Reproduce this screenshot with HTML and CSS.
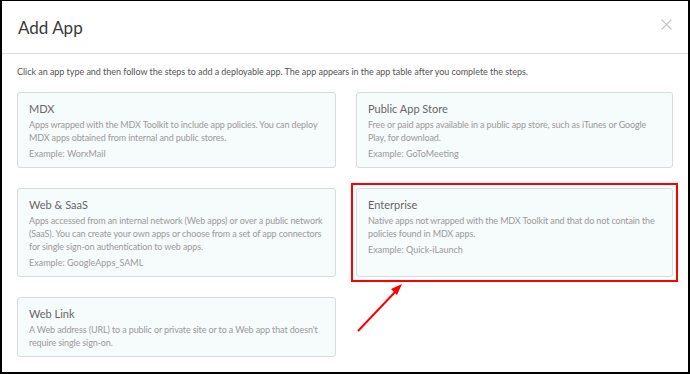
FILE: index.html
```html
<!DOCTYPE html>
<html lang="en">
<head>
    <meta charset="UTF-8">
    <meta name="viewport" content="width=device-width, initial-scale=1.0">
    <title>Add App</title>
    <link rel="stylesheet" href="styles.css">
</head>
<body>
    <div class="frame">
        <div class="header">
            <h1 class="title">Add App</h1>
            <svg class="close" width="11" height="11" viewBox="0 0 11 11">
                <path d="M0.5 0.5 L10.5 10.5 M10.5 0.5 L0.5 10.5" stroke="#c4c4c4" stroke-width="1.1" fill="none"/>
            </svg>
        </div>
        <div class="content">
            <p class="intro">Click an app type and then follow the steps to add a deployable app. The app appears in the app table after you complete the steps.</p>
            <div class="grid">
                <div class="card">
                    <div class="card-title">MDX</div>
                    <div class="card-desc">Apps wrapped with the MDX Toolkit to include app policies. You can deploy MDX apps obtained from internal and public stores.</div>
                    <div class="card-example">Example: WorxMail</div>
                </div>
                <div class="card">
                    <div class="card-title">Public App Store</div>
                    <div class="card-desc">Free or paid apps available in a public app store, such as iTunes or Google Play, for download.</div>
                    <div class="card-example">Example: GoToMeeting</div>
                </div>
                <div class="card">
                    <div class="card-title">Web &amp; SaaS</div>
                    <div class="card-desc">Apps accessed from an internal network (Web apps) or over a public network (SaaS). You can create your own apps or choose from a set of app connectors for single sign-on authentication to web apps.</div>
                    <div class="card-example">Example: GoogleApps_SAML</div>
                </div>
                <div class="card highlight">
                    <div class="card-title">Enterprise</div>
                    <div class="card-desc">Native apps not wrapped with the MDX Toolkit and that do not contain the policies found in MDX apps.</div>
                    <div class="card-example">Example: Quick-iLaunch</div>
                </div>
                <div class="card">
                    <div class="card-title">Web Link</div>
                    <div class="card-desc">A Web address (URL) to a public or private site or to a Web app that doesn't require single sign-on.</div>
                </div>
            </div>
        </div>
        <!-- annotation arrow pointing at the Enterprise card -->
        <svg class="arrow" width="690" height="374" viewBox="0 0 690 374">
            <line x1="358" y1="331" x2="396" y2="291" stroke="#f00" stroke-width="2"/>
            <polygon points="402,284 391,289 397,295" fill="#f00"/>
        </svg>
    </div>
</body>
</html>
```

FILE: styles.css
```css
body {
    margin: 0;
    background: #fff;
    font-family: Lato, "Open Sans", sans-serif;
    overflow: hidden;
}
.frame {
    position: relative;
    box-sizing: border-box;
    width: 690px;
    height: 374px;
    border: 2px solid #000;
    border-top-width: 1px;
}
.header {
    display: flex;
    justify-content: space-between;
    align-items: center;
    height: 52px;
    padding: 0 16px 0 16px;
    border-bottom: 1px solid #dcdcdc;
}
.title {
    margin: 0;
    font-size: 17px;
    font-weight: normal;
    color: #3a3a3a;
}
.close {
    margin-top: -6px;
}
.content {
    padding: 0 15px;
}
.intro {
    margin: 11px 0 14px 0;
    font-size: 9px;
    letter-spacing: -0.04px;
    line-height: 13px;
    color: #555;
}
.grid {
    display: grid;
    grid-template-columns: 319px 317px;
    column-gap: 20px;
    row-gap: 20px;
}
.card {
    position: relative;
    border: 1px solid #d9dcdc;
    border-radius: 3px;
    background: #f6fbfb;
    padding: 9px 7px 7px 11px;
}
.card-title {
    font-size: 11px;
    line-height: 14px;
    color: #666;
}
.card-desc {
    margin-top: 2px;
    font-size: 9px;
    letter-spacing: -0.12px;
    line-height: 13px;
    color: #9a9a9a;
}
.card-example {
    margin-top: 3px;
    font-size: 9px;
    line-height: 13px;
    color: #9a9a9a;
}
.highlight::after {
    content: "";
    position: absolute;
    top: -6px;
    left: -6px;
    right: -6px;
    bottom: -6px;
    border: 2px solid #f00;
}
.arrow {
    position: absolute;
    top: -1px;
    left: -2px;
    pointer-events: none;
}
```
